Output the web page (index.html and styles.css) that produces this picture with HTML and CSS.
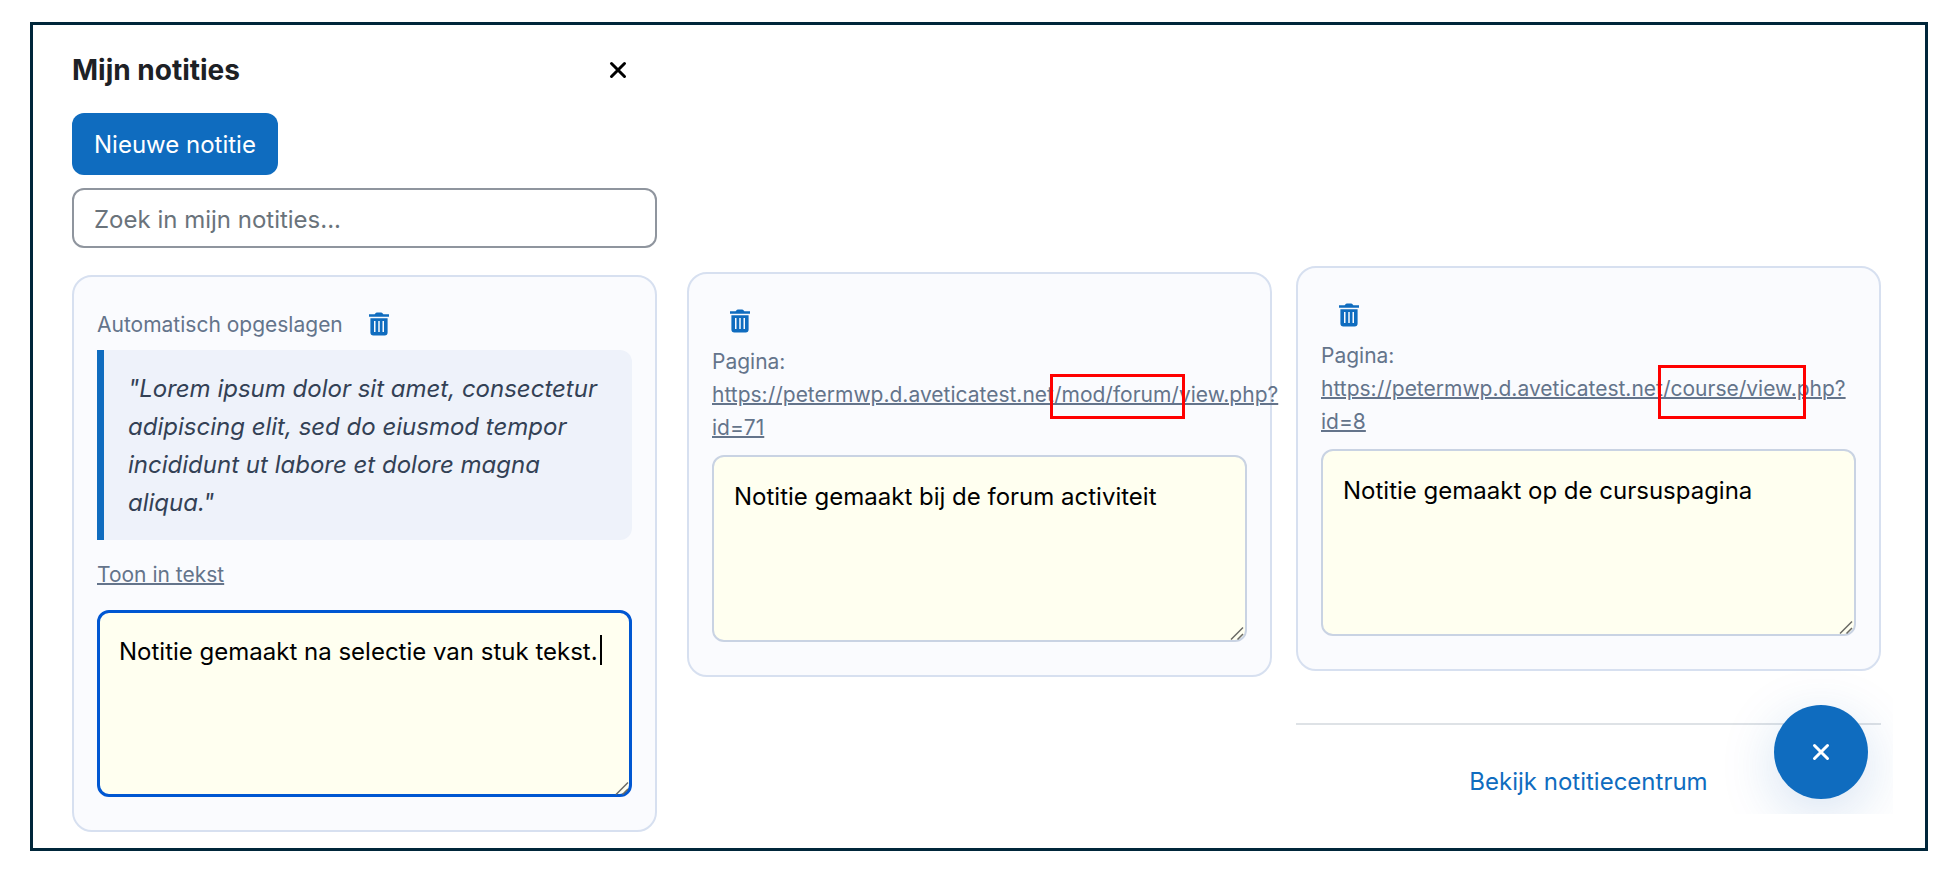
FILE: index.html
```html
<!DOCTYPE html>
<html lang="nl">
<head>
<meta charset="utf-8">
<title>Mijn notities</title>
<link rel="stylesheet" href="styles.css">
</head>
<body>
<svg class="defs" aria-hidden="true">
  <symbol id="trash" viewBox="0 0 20 24">
    <path fill="currentColor" fill-rule="evenodd" d="M0 2.2h5.6L7 .8Q7.400 .4 8 .4h4q.6 0 1 .4l1.400 1.400H20v2.600H0zM1.400 6.200h17.200V20.400a3 3 0 0 1-3 3H4.400a3 3 0 0 1-3-3zM5 9v11h1.500V9zM9.250 9v11h1.500V9zM13.500 9v11H15V9z"/>
  </symbol>
  <symbol id="cross" viewBox="0 0 18 18">
    <path fill="none" stroke="currentColor" stroke-width="3" stroke-linecap="round" d="M2.500 2.500l13 13M15.500 2.500l-13 13"/>
  </symbol>
  <symbol id="grip" viewBox="0 0 14 14">
    <path fill="none" stroke="#6b6b66" stroke-width="1.500" d="M1 13.500L13 1.500M7.500 13.500L13 8"/>
  </symbol>
</svg>
<main class="frame">
  <section class="column">
    <header class="panel-head">
      <h1 class="title">Mijn notities</h1>
      <button class="close" type="button" aria-label="Sluiten"><svg class="cross"><use href="#cross"/></svg></button>
    </header>
    <button class="new-note" type="button">Nieuwe notitie</button>
    <input class="search" type="search" placeholder="Zoek in mijn notities..." aria-label="Zoek in mijn notities">
    <article class="card">
      <div class="status">
        <span>Automatisch opgeslagen</span>
        <button class="delete" type="button" aria-label="Verwijderen"><svg class="trash"><use href="#trash"/></svg></button>
      </div>
      <blockquote class="quote">"Lorem ipsum dolor sit amet, consectetur adipiscing elit, sed do eiusmod tempor incididunt ut labore et dolore magna aliqua."</blockquote>
      <a class="show-link" href="#tekst">Toon in tekst</a>
      <div class="editor">
        <textarea class="note note-active" aria-label="Notitie">Notitie gemaakt na selectie van stuk tekst.</textarea>
        <span class="caret"></span>
        <svg class="grip"><use href="#grip"/></svg>
      </div>
    </article>
  </section>
  <section class="column column-forum">
    <article class="card">
      <div class="status">
        <button class="delete" type="button" aria-label="Verwijderen"><svg class="trash"><use href="#trash"/></svg></button>
      </div>
      <p class="page">Pagina:<br><a class="url" href="#forum">https://petermwp.d.aveticatest.net/mod/forum/view.php?<br>id=71</a></p>
      <div class="editor">
        <textarea class="note" aria-label="Notitie">Notitie gemaakt bij de forum activiteit</textarea>
        <svg class="grip"><use href="#grip"/></svg>
      </div>
      <span class="marker marker-forum"></span>
    </article>
  </section>
  <section class="column column-course">
    <article class="card">
      <div class="status">
        <button class="delete" type="button" aria-label="Verwijderen"><svg class="trash"><use href="#trash"/></svg></button>
      </div>
      <p class="page">Pagina:<br><a class="url" href="#course">https://petermwp.d.aveticatest.net/course/view.php?<br>id=8</a></p>
      <div class="editor">
        <textarea class="note" aria-label="Notitie">Notitie gemaakt op de cursuspagina</textarea>
        <svg class="grip"><use href="#grip"/></svg>
      </div>
      <span class="marker marker-course"></span>
    </article>
    <footer class="panel-foot">
      <a class="center-link" href="#notitiecentrum">Bekijk notitiecentrum</a>
      <div class="fab-area">
        <button class="fab" type="button" aria-label="Sluiten"><svg class="cross"><use href="#cross"/></svg></button>
      </div>
    </footer>
  </section>
</main>
</body>
</html>
```
FILE: styles.css
```css
* { box-sizing: border-box; }

body {
  margin: 0;
  padding: 22px 22px 28px 30px;
  background: #fff;
  color: #1d2125;
  font-family: Inter, "Liberation Sans", sans-serif;
  font-size: 24px;
}

button, input, textarea { font: inherit; }
button { border: 0; padding: 0; cursor: pointer; }

.defs { position: absolute; width: 0; height: 0; }

.frame {
  display: flex;
  align-items: flex-start;
  border: 3px solid #00263a;
  padding: 25px 44px 16px 39px;
}

.column { flex: 1 1 0; min-width: 0; }
.column-forum { margin-left: 30px; padding-top: 222px; }
.column-course { margin-left: 24px; padding-top: 216px; }

.panel-head {
  display: flex;
  align-items: center;
  justify-content: space-between;
  height: 40px;
  margin-bottom: 23px;
  padding-right: 30px;
}
.title { margin: 0; font-size: 28px; font-weight: 700; line-height: 40px; }
.close { display: flex; background: none; color: #000; }
.cross { width: 18px; height: 18px; }

.new-note {
  display: block;
  height: 62px;
  margin-bottom: 13px;
  padding: 0 22px;
  border-radius: 12px;
  background: #0f6cbf;
  color: #fff;
}

.search {
  display: block;
  width: 100%;
  height: 60px;
  margin-bottom: 27px;
  padding: 2px 20px 0;
  border: 2px solid #8f959e;
  border-radius: 12px;
  background: #fff;
}
.search::placeholder { color: #6a737b; opacity: 1; }

.card {
  position: relative;
  padding: 32px 23px 33px;
  border: 2px solid #d7e0f0;
  border-radius: 20px;
  background: #fafbfe;
}

.status {
  display: flex;
  align-items: center;
  gap: 8px;
  height: 30px;
  color: #64748b;
  font-size: 21px;
}
.delete { display: flex; padding: 0 18px; background: none; color: #0f6cbf; }
.trash { width: 20px; height: 24px; }

.quote {
  margin: 11px 0 20px;
  padding: 20px 24px 18px;
  border-left: 7px solid #0f6cbf;
  border-radius: 0 12px 12px 0;
  background: #eef2fa;
  color: #334155;
  font-style: italic;
  line-height: 38px;
}

.show-link {
  display: block;
  margin-bottom: 20px;
  color: #64748b;
  font-size: 21px;
  line-height: 30px;
  text-decoration-thickness: 2px;
}

.page { margin: 9px 0 11px; color: #64748b; font-size: 21px; line-height: 33px; }
.url { color: inherit; white-space: nowrap; text-decoration-thickness: 2px; }

.editor { position: relative; }
.note {
  display: block;
  width: 100%;
  height: 187px;
  padding: 21px 20px 20px;
  border: 2px solid #c9d3e3;
  border-radius: 12px;
  outline: 0;
  background: #fffff0;
  color: #000;
  line-height: 38px;
  resize: none;
}
.note-active { padding: 20px 19px 19px; border: 3px solid #0057d2; }
.caret { position: absolute; top: 25px; left: 503px; width: 2px; height: 30px; background: #000; }
.grip { position: absolute; right: 3px; bottom: 2px; width: 14px; height: 14px; }

.marker { position: absolute; border: 3px solid #f00; }
.marker-forum { top: 100px; left: 361px; width: 135px; height: 45px; }
.marker-course { top: 97px; left: 360px; width: 148px; height: 54px; }

.panel-foot {
  position: relative;
  margin-top: 52px;
  padding: 39px 0 28px;
  border-top: 2px solid #dee2e6;
  text-align: center;
}
.center-link { color: #0f6cbf; line-height: 36px; text-decoration: none; }

.fab-area {
  position: absolute;
  top: -56px;
  right: -12px;
  overflow: hidden;
  padding: 36px 25px 15px 60px;
}
.fab {
  display: grid;
  place-items: center;
  width: 94px;
  height: 94px;
  border-radius: 50%;
  background: #0f6cbf;
  color: #fff;
  box-shadow: 0 14px 56px rgba(15, 90, 180, 0.18);
}
```
